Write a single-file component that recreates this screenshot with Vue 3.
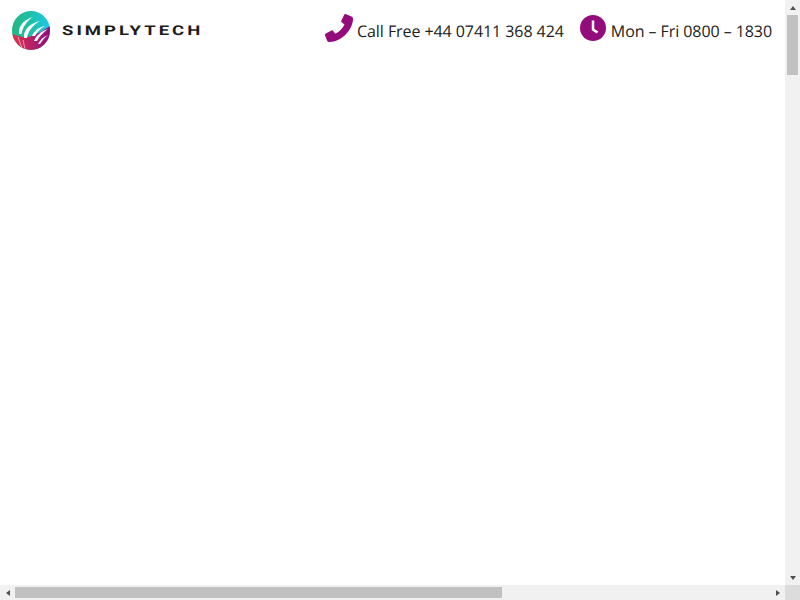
<script setup>
const thumbWidth = 487
const thumbHeight = 60
</script>

<template>
  <div class="viewport">
    <main class="content">
      <header class="header">
        <a class="brand" href="#">
          <svg class="mark" width="38" height="39" viewBox="0 0 38 39">
            <defs>
              <linearGradient id="top" x1="0" y1="0.3" x2="1" y2="0.2">
                <stop offset="0" stop-color="#22b684" />
                <stop offset="0.5" stop-color="#1fc0a8" />
                <stop offset="1" stop-color="#1cc8ee" />
              </linearGradient>
              <linearGradient id="bottom" x1="0" y1="0" x2="1" y2="0">
                <stop offset="0" stop-color="#e0344c" />
                <stop offset="1" stop-color="#8e0e82" />
              </linearGradient>
              <clipPath id="disc"><ellipse cx="19" cy="19.500" rx="19" ry="19.500" /></clipPath>
            </defs>
            <g clip-path="url(#disc)">
              <rect width="38" height="39" fill="url(#top)" />
              <path d="M0 23 Q12 28 20 25 Q30 21 38 15 V39 H0 Z" fill="url(#bottom)" />
              <g fill="#fff">
                <path d="M7 23 C6 16 11 9 21 6 C15 10 10.500 16 9.500 23 Z" />
                <path d="M12 27 C11 19 18 12 28 10 C21 14 16 20 15 27 Z" />
                <path d="M20 25 C22 20 27 16 33 15 C28 18 25 21 23 25 Z" />
                <path d="M22 30 C24 25 29 20 36 18 C31 22 27.500 25 25 30 Z" />
                <path d="M26 33 C28 29 31 26 36 24 C32 27 30 30 28 33 Z" />
              </g>
              <g fill="none" stroke="#f3a9b8" stroke-width="0.900">
                <path d="M6 26 L10 37" />
                <path d="M11 29 L13 38" />
              </g>
            </g>
          </svg>
          <span class="wordmark">SIMPLYTECH</span>
        </a>
        <div class="contacts">
          <div class="contact">
            <svg class="icon" width="28" height="28" viewBox="0 0 28 28">
              <path fill="#940c7c" d="M20.500 0L26.500 2.500C27.700 3 28 4 28 5C28 15 17 28 4.500 28C3.500 28 2.500 27.500 2 26.500L0 21.500C-.2 20.800 .2 20 .8 19.600L6.500 16.500C7.200 16.200 7.800 16.400 8.200 16.900L10.200 19.800C14 18 17.500 14.500 19.500 10.500L16.600 8.200C16.100 7.700 16 7 16.400 6.400L19.200 .7C19.500 .1 20 -.1 20.500 0Z" />
            </svg>
            <span>Call Free +44 07411 368 424</span>
          </div>
          <div class="contact">
            <svg class="icon" width="26" height="26" viewBox="0 0 26 26">
              <circle cx="13" cy="13" r="13" fill="#940c7c" />
              <path d="M13 5.500V14.500L17.500 17.500" fill="none" stroke="#fff" stroke-width="2.500" />
            </svg>
            <span>Mon – Fri 0800 – 1830</span>
          </div>
        </div>
      </header>
    </main>

    <div class="scrollbar vertical">
      <button class="arrow"><span class="tri up"></span></button>
      <div class="track">
        <div class="thumb" :style="{ height: thumbHeight + 'px' }"></div>
      </div>
      <button class="arrow"><span class="tri down"></span></button>
    </div>

    <div class="scrollbar horizontal">
      <button class="arrow"><span class="tri left"></span></button>
      <div class="track">
        <div class="thumb" :style="{ width: thumbWidth + 'px' }"></div>
      </div>
      <button class="arrow"><span class="tri right"></span></button>
    </div>

    <div class="corner"></div>
  </div>
</template>

<style>
body {
  margin: 0;
  background: #fff;
}
</style>

<style scoped>
.viewport {
  width: 800px;
  height: 600px;
  display: grid;
  grid-template-columns: 785px 15px;
  grid-template-rows: 585px 15px;
  overflow: hidden;
  background: #fff;
}
.content {
  min-width: 0;
  overflow: hidden;
}
.header {
  height: 61px;
  box-sizing: border-box;
  padding: 0 13px 0 12px;
  display: flex;
  align-items: center;
  justify-content: space-between;
  font-family: "Open Sans", sans-serif;
  font-size: 16px;
  line-height: 22px;
  color: #212121;
  text-rendering: geometricPrecision;
}
.brand {
  display: flex;
  align-items: center;
  gap: 12px;
  color: #1c1c1c;
  text-decoration: none;
}
.mark {
  display: block;
}
.wordmark {
  font-family: "Roboto", sans-serif;
  font-weight: 700;
  font-size: 13.500px;
  letter-spacing: 2.200px;
  transform: scaleX(1.370);
  transform-origin: left center;
}
.contacts {
  display: flex;
  align-items: center;
  gap: 16px;
  padding-top: 1px;
}
.contact {
  display: flex;
  align-items: center;
  gap: 4px;
}
.contact span {
  letter-spacing: -0.070px;
}
.icon {
  display: block;
  margin-top: -7px;
}
.contact + .contact {
  gap: 5px;
}

.scrollbar {
  display: flex;
  background: #f1f1f1;
}
.vertical {
  flex-direction: column;
}
.arrow {
  flex: none;
  width: 15px;
  height: 15px;
  padding: 0;
  border: 0;
  background: transparent;
  display: flex;
  align-items: center;
  justify-content: center;
}
.track {
  flex: 1;
  min-width: 0;
  min-height: 0;
}
.vertical .thumb {
  margin: 0 2px;
  background: #c1c1c1;
}
.horizontal .thumb {
  height: 11px;
  margin-top: 2px;
  background: #c1c1c1;
}
.tri {
  display: block;
  width: 0;
  height: 0;
  border-style: solid;
  border-color: transparent;
}
.up {
  border-width: 0 3.500px 4px;
  border-bottom-color: #505050;
}
.down {
  border-width: 4px 3.500px 0;
  border-top-color: #505050;
}
.left {
  border-width: 3.500px 4px 3.500px 0;
  border-right-color: #505050;
}
.right {
  border-width: 3.500px 0 3.500px 4px;
  border-left-color: #505050;
}
.corner {
  background: #dcdcdc;
}
</style>
